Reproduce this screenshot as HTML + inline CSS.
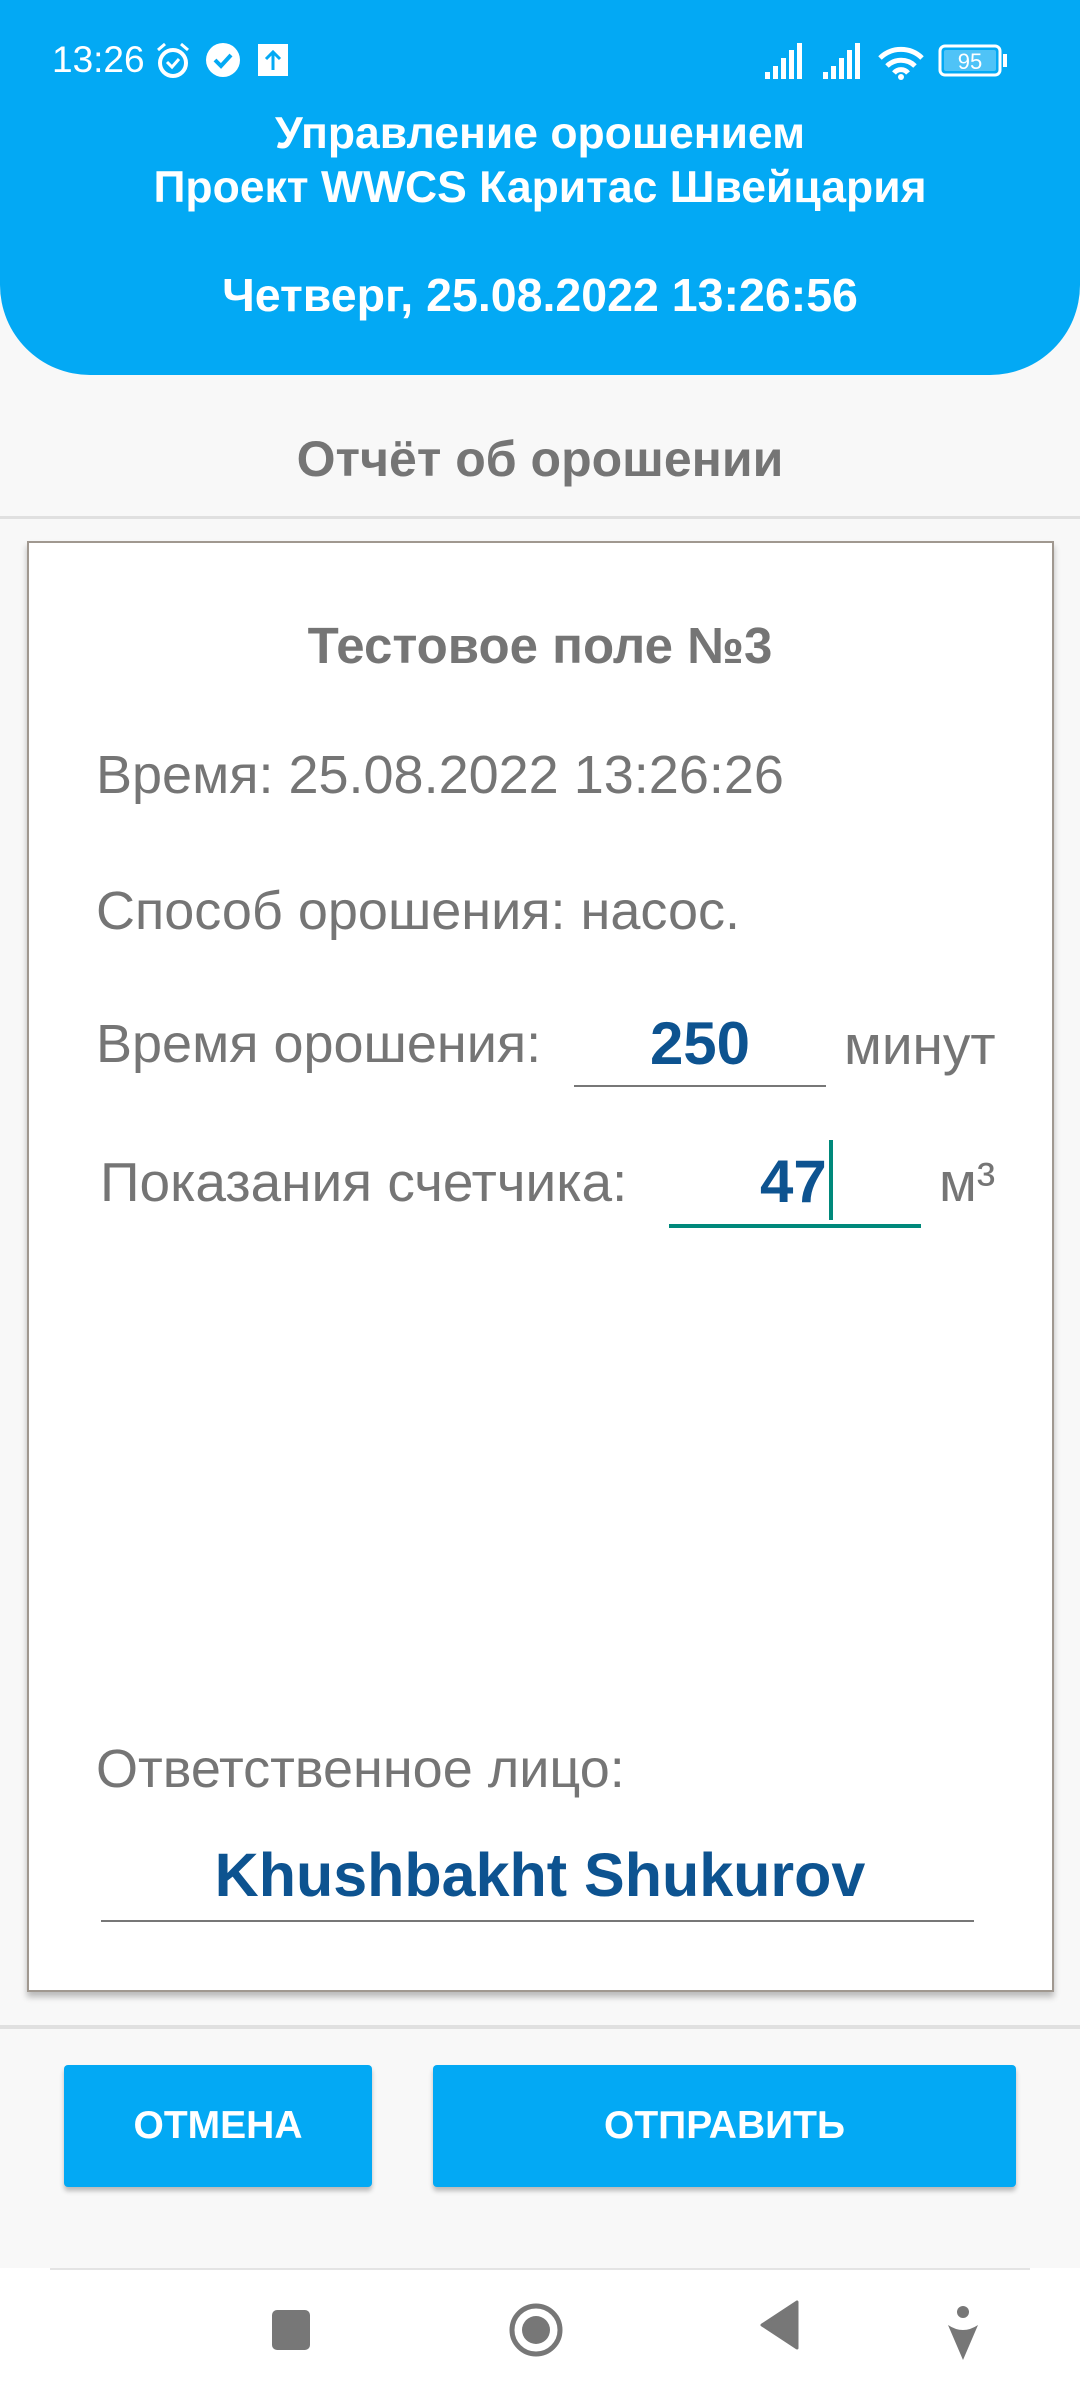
<!DOCTYPE html>
<html><head><meta charset="utf-8"><style>
*{margin:0;padding:0;box-sizing:border-box}
body{width:1080px;height:2400px;background:#f8f8f8;font-family:"Liberation Sans",sans-serif;position:relative;overflow:hidden;color:#757575}
.a{position:absolute}
#hdr{left:0;top:0;width:1080px;height:375px;background:#03a9f4;border-radius:0 0 90px 90px}
.c{width:1080px;text-align:center;left:0}
.w{color:#fff}
.b{font-weight:bold}
.blue{color:#0d5390;font-weight:bold}
</style></head><body>
<div class="a" id="hdr"></div>
<div class="a w" style="left:52px;top:39px;font-size:37px">13:26</div>
<svg class="a" style="left:152px;top:40px" width="42" height="42" viewBox="0 0 42 42"><circle cx="21" cy="23" r="13" fill="none" stroke="#fff" stroke-width="4"/><path d="M15 22l5 5 7-8" fill="none" stroke="#fff" stroke-width="3"/><path d="M6 10l7-6M36 10l-7-6" stroke="#fff" stroke-width="3"/></svg>
<svg class="a" style="left:205px;top:42px" width="36" height="36"><circle cx="18" cy="18" r="17" fill="#fff"/><path d="M10 18l6 6 10-11" fill="none" stroke="#03a9f4" stroke-width="4"/></svg>
<svg class="a" style="left:258px;top:44px" width="32" height="32"><rect width="30" height="32" fill="#fff"/><path d="M15 26V8M8 15l7-7 7 7" fill="none" stroke="#03a9f4" stroke-width="3"/></svg>
<svg class="a" style="left:760px;top:40px" width="260" height="40"><g fill="#fff"><rect x="5" y="32" width="5" height="7"/><rect x="13" y="26" width="5" height="13"/><rect x="21" y="18" width="5" height="21"/><rect x="29" y="10" width="5" height="29"/><rect x="37" y="3" width="5" height="36"/><rect x="63" y="32" width="5" height="7"/><rect x="71" y="26" width="5" height="13"/><rect x="79" y="18" width="5" height="21"/><rect x="87" y="10" width="5" height="29"/><rect x="95" y="3" width="5" height="36"/></g><path d="M120 18a30 30 0 0 1 42 0M127 26a20 20 0 0 1 28 0M134 33a9 9 0 0 1 14 0" fill="none" stroke="#fff" stroke-width="5"/><circle cx="141" cy="37" r="3" fill="#fff"/><rect x="180" y="6" width="60" height="29" rx="5" fill="none" stroke="#fff" stroke-width="3"/><rect x="184" y="10" width="52" height="21" rx="2" fill="#4fc3f7"/><rect x="243" y="14" width="4" height="13" fill="#fff"/><text x="210" y="29" font-size="22" fill="#fff" text-anchor="middle" font-family="Liberation Sans">95</text></svg>
<div class="a c w b" style="top:107px;font-size:44.5px;line-height:54px">Управление орошением<br>Проект WWCS Каритас Швейцария</div>
<div class="a c w b" style="top:268px;font-size:46.5px">Четверг, 25.08.2022 13:26:56</div>
<div class="a c b" style="top:430px;font-size:50px">Отчёт об орошении</div>
<div class="a" style="left:0;top:516px;width:1080px;height:3px;background:#e0e0e0"></div>
<div class="a" style="left:27px;top:541px;width:1027px;height:1451px;background:#fff;border:2px solid #a09890;box-shadow:0 5px 6px rgba(0,0,0,.25)"></div>
<div class="a c b" style="top:616px;font-size:51px;left:0">Тестовое поле №3</div>
<div class="a" style="left:96px;top:744px;font-size:54px">Время: 25.08.2022 13:26:26</div>
<div class="a" style="left:96px;top:880px;font-size:54px">Способ орошения: насос.</div>
<div class="a" style="left:96px;top:1013px;font-size:54px">Время орошения:</div>
<div class="a blue" style="left:574px;width:252px;text-align:center;top:1009px;font-size:60px">250</div>
<div class="a" style="left:574px;top:1085px;width:252px;height:2px;background:#777"></div>
<div class="a" style="left:844px;top:1013px;font-size:55px">минут</div>
<div class="a" style="left:100px;top:1150px;font-size:55px">Показания счетчика:</div>
<div class="a blue" style="left:760px;top:1147px;font-size:60px">47</div>
<div class="a" style="left:829px;top:1140px;width:4px;height:80px;background:#00897b"></div>
<div class="a" style="left:669px;top:1224px;width:252px;height:4px;background:#00897b"></div>
<div class="a" style="left:939px;top:1150px;font-size:55px">м³</div>
<div class="a" style="left:96px;top:1738px;font-size:54px">Ответственное лицо:</div>
<div class="a c blue" style="top:1840px;font-size:61px">Khushbakht Shukurov</div>
<div class="a" style="left:101px;top:1920px;width:873px;height:2px;background:#777"></div>
<div class="a" style="left:0;top:2025px;width:1080px;height:4px;background:#e0e0e0"></div>
<div class="a w b" style="left:64px;top:2065px;width:308px;height:122px;background:#03a9f4;border-radius:4px;box-shadow:0 4px 5px rgba(0,0,0,.25);text-align:center;line-height:122px;font-size:39px">ОТМЕНА</div>
<div class="a w b" style="left:433px;top:2065px;width:583px;height:122px;background:#03a9f4;border-radius:4px;box-shadow:0 4px 5px rgba(0,0,0,.25);text-align:center;line-height:122px;font-size:39px">ОТПРАВИТЬ</div>
<div class="a" style="left:0;top:2268px;width:1080px;height:132px;background:#fff"></div>
<div class="a" style="left:50px;top:2268px;width:980px;height:2px;background:#e4e4e4"></div>
<svg class="a" style="left:0;top:2290px" width="1080" height="90"><rect x="272" y="20" width="38" height="40" rx="5" fill="#777"/><circle cx="536" cy="40" r="24" fill="none" stroke="#777" stroke-width="5"/><circle cx="536" cy="40" r="14" fill="#777"/><path d="M797 12v46L762 35z" fill="#777" stroke="#777" stroke-width="3" stroke-linejoin="round"/><circle cx="963" cy="22" r="6" fill="#777"/><path d="M948 35q15 10 30 0l-15 35z" fill="#777"/></svg>
</body></html>
